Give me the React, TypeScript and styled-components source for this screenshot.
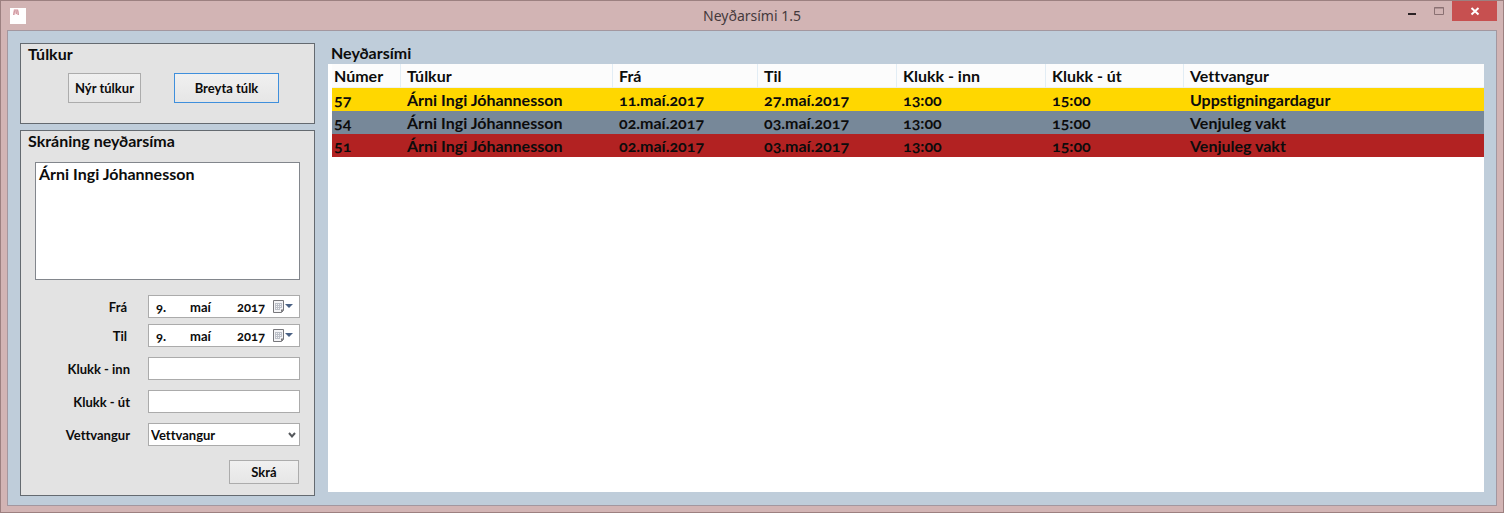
import React from "react";
import styled, { createGlobalStyle } from "styled-components";

const GlobalStyle = createGlobalStyle`
  *, *::before, *::after { box-sizing: border-box; }
  body { margin: 0; }
  body, button, input, select, option {
    font-family: Lato, "Open Sans", sans-serif;
    font-variant-numeric: oldstyle-nums;
    font-variant-ligatures: none;
    font-weight: 700;
    color: #0c0c0c;
  }
`;

const Window = styled.div`
  display: flex;
  flex-direction: column;
  min-height: 100vh;
  padding: 0 6px 6px;
  border: 1px solid #9c8080;
  background: #d2b4b4;
`;

const TitleBar = styled.header`
  display: grid;
  grid-template-columns: 1fr auto 1fr;
  align-items: center;
  height: 29px;
`;

const AppIcon = styled.svg`
  display: block;
  width: 16px;
  height: 16px;
  margin-left: 3px;
`;

const Title = styled.h1`
  margin: 0;
  font: 400 14px/28px "Noto Sans", "Open Sans", sans-serif;
  font-variant-numeric: lining-nums;
  color: #453a3c;
`;

const WindowControls = styled.div`
  display: flex;
  align-self: start;
  justify-content: flex-end;
`;

const WindowButton = styled.button<{ $close?: boolean }>`
  display: grid;
  place-items: center;
  width: ${(p) => (p.$close ? 45 : 27)}px;
  height: 20px;
  padding: 0;
  border: 0;
  background: ${(p) => (p.$close ? "#c75050" : "transparent")};
`;

const Client = styled.main`
  flex: 1;
  display: flex;
  gap: 13px;
  padding: 12px 12px 9px;
  border: 1px solid #a3979f;
  background: #bfcdda;
`;

const Sidebar = styled.div`
  display: flex;
  flex-direction: column;
  flex: 0 0 295px;
  gap: 6px;
`;

const Panel = styled.section<{ $grow?: boolean }>`
  flex: ${(p) => (p.$grow ? "1 0 auto" : "0 0 81px")};
  border: 1px solid #646a70;
  background: #e3e3e3;
`;

const Heading = styled.h2`
  margin: 0;
  padding: 0 7px;
  font-size: 16px;
  line-height: 20px;
`;

const ButtonRow = styled.div`
  display: flex;
  gap: 33px;
  padding: 9px 35px 0 47px;
`;

const Button = styled.button<{ $width: number; $focused?: boolean }>`
  width: ${(p) => p.$width}px;
  height: ${(p) => (p.$width > 70 ? 30 : 24)}px;
  padding: 0;
  border: 1px solid ${(p) => (p.$focused ? "#3f8fdc" : "#acacac")};
  background: linear-gradient(#f0f0f0, #e6e6e6);
  font-size: 13px;
  white-space: nowrap;
`;

const Form = styled.form`
  display: flex;
  flex-direction: column;
  gap: 10px;
  padding: 11px 14px;
`;

const ListBox = styled.select`
  height: 118px;
  margin-bottom: 5px;
  padding: 1px;
  border: 1px solid #82868c;
  border-radius: 0;
  background: #fff;
  font-size: 16px;
  line-height: 20px;
`;

const DateRows = styled.div`
  display: flex;
  flex-direction: column;
  gap: 6px;
`;

const Field = styled.div<{ $inset?: boolean }>`
  display: grid;
  grid-template-columns: 1fr 152px;
  align-items: center;
  column-gap: ${(p) => (p.$inset ? 21 : 18)}px;
`;

const Label = styled.label`
  font-size: 13px;
  line-height: 20px;
  text-align: right;
`;

const TextBox = styled.input`
  width: 100%;
  height: 23px;
  padding: 0 4px;
  border: 1px solid #ababab;
  background: #fff;
  font-size: 13px;
`;

const DateBox = styled.div`
  display: grid;
  grid-template-columns: 34px 47px 35px 1fr;
  align-items: center;
  height: 23px;
  padding-left: 7px;
  border: 1px solid #ababab;
  background: #fff;
`;

const DatePart = styled.input`
  width: 100%;
  padding: 0;
  border: 0;
  background: transparent;
  font-size: 13px;
  line-height: 20px;
`;

const CalendarButton = styled.button`
  padding: 0;
  border: 0;
  background: transparent;
  svg { display: block; }
`;

const SelectWrap = styled.div`
  display: grid;
  align-items: center;
  > * { grid-area: 1 / 1; }
  svg { justify-self: end; margin-right: 4px; pointer-events: none; }
`;

const Select = styled.select`
  width: 100%;
  height: 23px;
  padding: 0 2px;
  border: 1px solid #ababab;
  border-radius: 0;
  appearance: none;
  background: #fff;
  font-size: 13px;
`;

const Submit = styled.div`
  display: flex;
  justify-content: flex-end;
  padding: 4px 1px 0 0;
`;

const Content = styled.section`
  flex: 1;
  min-width: 0;
  display: flex;
  flex-direction: column;
  padding-bottom: 4px;
`;

const ContentHeading = styled(Heading)`
  height: 21px;
  padding: 0 3px;
`;

const List = styled.div`
  flex: 1;
  padding-left: 4px;
  background: #fff;
`;

const Table = styled.table`
  width: 100%;
  border-collapse: separate;
  border-spacing: 0;
  table-layout: fixed;
  font-size: 16px;
  line-height: 20px;
  text-align: left;
  white-space: nowrap;
`;

const HeadCell = styled.th<{ $width?: number }>`
  width: ${(p) => (p.$width ? p.$width + "px" : "auto")};
  height: 24px;
  padding: 0 2px;
  border-bottom: 1px solid #edf1f5;
  background: #fcfcfc;
  & + & { padding-left: 6px; border-left: 1px solid #e2edf5; }
`;

const Row = styled.tr<{ $color: string }>`
  background: ${(p) => p.$color};
`;

const Cell = styled.td`
  height: 23px;
  padding: 0 2px;
  & + & { padding-left: 7px; }
`;

const columns: { name: string; width?: number }[] = [
  { name: "Númer", width: 68 },
  { name: "Túlkur", width: 212 },
  { name: "Frá", width: 145 },
  { name: "Til", width: 139 },
  { name: "Klukk - inn", width: 149 },
  { name: "Klukk - út", width: 138 },
  { name: "Vettvangur" },
];

const rows = [
  { color: "#ffd700", cells: ["57", "Árni Ingi Jóhannesson", "11.maí.2017", "27.maí.2017", "13:00", "15:00", "Uppstigningardagur"] },
  { color: "#778899", cells: ["54", "Árni Ingi Jóhannesson", "02.maí.2017", "03.maí.2017", "13:00", "15:00", "Venjuleg vakt"] },
  { color: "#b22222", cells: ["51", "Árni Ingi Jóhannesson", "02.maí.2017", "03.maí.2017", "13:00", "15:00", "Venjuleg vakt"] },
];

function CalendarIcon() {
  return (
    <svg width="22" height="14" viewBox="0 0 22 14">
      <path d="M1.5 .5h10v10l-2 2h-8z" fill="#f4f4f6" stroke="#77777b" />
      <path d="M3 3.500h7M3 5.500h7M3 7.500h7M3 9.500h5M3.500 3v7M5.500 3v7M7.500 3v7M9.500 3v5" stroke="#bcc0c8" />
      <path d="M9 12.500v-3h3z" fill="#77777b" />
      <path d="M13 4h8l-4 4z" fill="#4a6184" />
    </svg>
  );
}

function DateField({ id, label }: { id: string; label: string }) {
  return (
    <Field $inset>
      <Label htmlFor={id}>{label}</Label>
      <DateBox>
        <DatePart id={id} defaultValue="9." />
        <DatePart aria-label={label + " mánuður"} defaultValue="maí" />
        <DatePart aria-label={label + " ár"} defaultValue="2017" />
        <CalendarButton type="button" aria-label={label + " dagatal"}>
          <CalendarIcon />
        </CalendarButton>
      </DateBox>
    </Field>
  );
}

export default function App() {
  return (
    <>
      <GlobalStyle />
      <Window>
        <TitleBar>
          <AppIcon viewBox="0 0 16 16" aria-hidden="true">
            <path d="M0 0h16v16H0z" fill="#fff" />
            <path d="M3 7V4l1-3h4l1 3v3H7L6 5 5 7z" fill="#ecc6cb" />
            <path d="M3.500 7l1.500-5M6 2l.5 4M7.500 2l1 5" fill="none" stroke="#cf9aa2" />
          </AppIcon>
          <Title>Neyðarsími 1.5</Title>
          <WindowControls>
            <WindowButton aria-label="Minimize">
              <svg width="12" height="12"><path d="M2 8h8v2H2z" fill="#2b2224" /></svg>
            </WindowButton>
            <WindowButton aria-label="Maximize">
              <svg width="12" height="12"><path d="M1.500 2.500h9v7h-9zM1 3h10" fill="none" stroke="#8a7072" /></svg>
            </WindowButton>
            <WindowButton $close aria-label="Close">
              <svg width="10" height="10"><path d="M1.500 2l7 6.500M8.500 2l-7 6.500" stroke="#fff" strokeWidth="2" /></svg>
            </WindowButton>
          </WindowControls>
        </TitleBar>
        <Client>
          <Sidebar>
            <Panel>
              <Heading>Túlkur</Heading>
              <ButtonRow>
                <Button $width={73}>Nýr túlkur</Button>
                <Button $width={105} $focused>Breyta túlk</Button>
              </ButtonRow>
            </Panel>
            <Panel $grow>
              <Heading>Skráning neyðarsíma</Heading>
              <Form onSubmit={(e) => e.preventDefault()}>
                <ListBox size={5} aria-label="Túlkur">
                  <option>Árni Ingi Jóhannesson</option>
                </ListBox>
                <DateRows>
                  <DateField id="from" label="Frá" />
                  <DateField id="to" label="Til" />
                </DateRows>
                <Field>
                  <Label htmlFor="clock-in">Klukk - inn</Label>
                  <TextBox id="clock-in" />
                </Field>
                <Field>
                  <Label htmlFor="clock-out">Klukk - út</Label>
                  <TextBox id="clock-out" />
                </Field>
                <Field>
                  <Label htmlFor="venue">Vettvangur</Label>
                  <SelectWrap>
                    <Select id="venue">
                      <option>Vettvangur</option>
                    </Select>
                    <svg width="8" height="8"><path d="M1 2l3 3.500L7 2" fill="none" stroke="#55585c" strokeWidth="2" /></svg>
                  </SelectWrap>
                </Field>
                <Submit>
                  <Button $width={70}>Skrá</Button>
                </Submit>
              </Form>
            </Panel>
          </Sidebar>
          <Content>
            <ContentHeading>Neyðarsími</ContentHeading>
            <List>
              <Table>
                <thead>
                  <tr>
                    {columns.map((c) => (
                      <HeadCell key={c.name} $width={c.width}>{c.name}</HeadCell>
                    ))}
                  </tr>
                </thead>
                <tbody>
                  {rows.map((r) => (
                    <Row key={r.cells[0]} $color={r.color}>
                      {r.cells.map((c, i) => <Cell key={i}>{c}</Cell>)}
                    </Row>
                  ))}
                </tbody>
              </Table>
            </List>
          </Content>
        </Client>
      </Window>
    </>
  );
}
